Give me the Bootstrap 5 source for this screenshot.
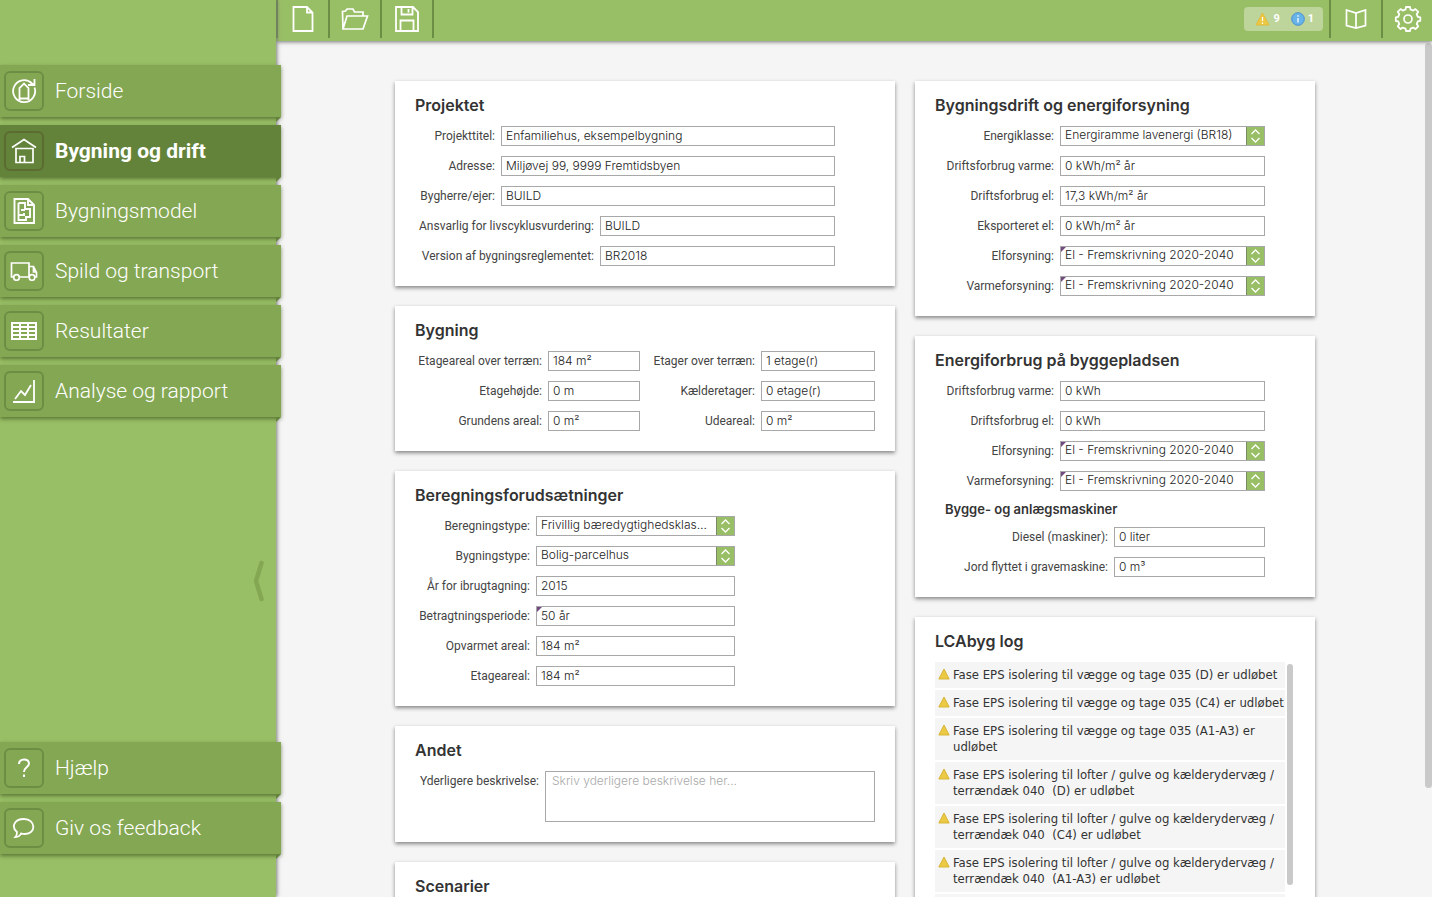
<!DOCTYPE html>
<html lang="da">
<head>
<meta charset="utf-8">
<meta name="viewport" content="width=device-width, initial-scale=1">
<title>LCAbyg – Bygning og drift</title>
<link href="https://cdn.jsdelivr.net/npm/bootstrap@5.3.0/dist/css/bootstrap.min.css" rel="stylesheet">
<style>
  :root { --leaf:#99bf66; --moss:#84a753; --pine:#63833a; --edge:#6b8e44; --ink:#333; }
  body { font-family:Roboto, "Liberation Sans", sans-serif; color:var(--ink); background:#f5f5f5; }
  svg { display:block; fill:none; stroke:#fff; stroke-width:2; }

  .side { width:276px; background:var(--leaf); box-shadow:1px 0 4px #777; z-index:2; padding:65px 0 43px; }
  .side-list { display:flex; flex-direction:column; gap:8px; margin-right:-5px; }
  .side-link { position:relative; display:flex; align-items:center; gap:11px; height:52px; padding-left:4px;
    background:var(--moss); color:#fff; font-size:21px; line-height:28px; font-weight:300; text-decoration:none; box-shadow:0 2px 4px rgba(50,70,20,.6); }
  .side-link::after { content:""; position:absolute; top:100%; right:0; border-top:5px solid var(--pine); border-right:5px solid transparent; }
  .side-link.active { background:var(--pine); font-weight:700; }
  .side-icon { width:40px; height:40px; border:2px solid var(--edge); border-radius:6px; display:grid; place-items:center; }
  .active .side-icon { border-color:#5c6c30; }
  .fold { border:0; background:none; padding:2px 12px 0 0; }

  .topbar { height:41px; background:var(--leaf); z-index:1; box-shadow:0 1px 4px #777; }
  .tool { width:52px; height:38px; border:0; border-left:2px solid var(--edge); background:none; padding:0; display:grid; place-items:center; }
  .tool-last { border-right:2px solid var(--edge); width:54px; }
  .tool-end { width:51px; }
  .status { height:24px; padding:0 9px 0 11px; margin:7px 6px 0 0; border:0; border-radius:4px; background:#bdd49b; color:#fff; font-size:11px; font-weight:700; gap:3px; }

  .scroller { overflow-y:auto; scrollbar-width:none; padding:40px 0 20px 2px; }
  .scroller::-webkit-scrollbar, .log::-webkit-scrollbar { display:none; }
  .thumb { position:absolute; width:7px; border-radius:4px; background:#c9c9c9; }
  .thumb-page { right:0; top:2px; height:87%; }
  .thumb-log { right:-8px; top:2px; height:74%; width:6px; }
  .board { max-width:920px; display:grid; grid-template-columns:minmax(0,5fr) minmax(0,4fr); gap:20px; margin:0 auto; }
  .stack { display:flex; flex-direction:column; gap:20px; }
  .panel { background:#fff; padding:15px 20px 20px; box-shadow:0 2px 4px rgba(0,0,0,.45); }
  .panel h2 { font-family:Inter, Roboto, sans-serif; font-size:16px; line-height:18px; font-weight:600; margin:0 0 12px; }
  .panel h3 { font-family:Inter, Roboto, sans-serif; font-size:13px; line-height:16px; font-weight:600; margin:10px 0 10px 10px; }

  .fields { display:grid; gap:10px 6px; align-items:center; }
  .fields label { font-size:12px; line-height:20px; text-align:right; white-space:nowrap; color:#444; }
  .f-short { grid-template-columns:80px 1fr; padding-right:40px; }
  .f-long { grid-template-columns:179px 1fr; padding-right:40px; margin-top:10px; }
  .f-double { grid-template-columns:127px 92px 109px 1fr; }
  .f-calc { grid-template-columns:115px 1fr; padding-right:140px; }
  .f-energy { grid-template-columns:119px 1fr; padding-right:30px; }
  .f-machine { grid-template-columns:173px 1fr; padding-right:30px; }
  .f-note { grid-template-columns:124px 1fr; align-items:start; }
  .fields input, .fields select, .fields textarea { width:100%; min-width:0; height:20px; padding:0 4px 2px; border:1px solid #a8a8a8;
    border-radius:0; background:#fff; color:#222; font-family:Inter, Roboto, sans-serif; font-weight:300; font-size:12px; line-height:16px; }
  .fields textarea { height:51px; padding:1px 6px; resize:none; display:block; }
  .fields textarea::placeholder { color:#aaa; }
  .fields select { appearance:none; padding-right:22px; background:#fff url("data:image/svg+xml,%3Csvg xmlns='http://www.w3.org/2000/svg' width='19' height='20'%3E%3Cpath fill='%2399bf66' stroke='%237b8b68' d='M.5.5h18v19H.5z'/%3E%3Cpath fill='none' stroke='%23fff' stroke-width='1.3' d='M5.500 8l4-4 4 4M5.500 12l4 4 4-4'/%3E%3C/svg%3E") right center/19px 20px no-repeat border-box; }
  .tagbox { position:relative; }
  .tagbox::before { content:""; position:absolute; left:1px; top:1px; border-top:5px solid #734a80; border-right:5px solid transparent; }

  .log-wrap { position:relative; margin-right:10px; }
  .log { height:298px; overflow-y:auto; scrollbar-width:none; font:13px/16px "DejaVu Sans Condensed", "Noto Sans", sans-serif; }
  .log li { display:flex; gap:3px; padding:5px 0 5px 3px; margin-bottom:2px; background:#f5f5f5; white-space:pre-wrap; }
  .log svg { flex:none; margin-top:1px; stroke:#d8b537; stroke-width:1; fill:#ecc944; }
  .scen { min-height:113px; }
</style>
</head>
<body>
<div class="d-flex vh-100 overflow-hidden">
  <nav class="side d-flex flex-column flex-shrink-0 position-relative" aria-label="Hovedmenu">
    <div class="side-list">
      <a class="side-link" href="#"><span class="side-icon"><svg width="26" height="26" viewBox="0 0 26 26"><path d="M23.500 9.500A11 11 0 1 1 21 5.500l2.500 2M17 7h6.500V1M8.500 22V10L13 5.500 17.500 10v12M8 20.500h10" stroke-width="1.800"/></svg></span><span class="side-text">Forside</span></a>
      <a class="side-link active" href="#" aria-current="page"><span class="side-icon"><svg width="26" height="26" viewBox="0 0 26 26"><path d="M1 9.500 13 1.500 25 9.500M5 10.500v14h17v-14zM9 24.500v-6h4.500v6" stroke-width="1.700"/></svg></span><span class="side-text">Bygning og drift</span></a>
      <a class="side-link" href="#"><span class="side-icon"><svg width="26" height="28" viewBox="0 0 26 28"><path d="M3.500 2H17l6 6v18H3.500zM17 2v6h6M7.500 6H14v6h5v8h-4v3H7.500v-5H13v-2M7.500 6v11M10 13h4" stroke-width="1.900"/></svg></span><span class="side-text">Bygningsmodel</span></a>
      <a class="side-link" href="#"><span class="side-icon"><svg width="28" height="20" viewBox="0 0 28 20"><path d="M3.500 16H1.500V2H19v14H9M19 5.500h4.500l3 6V16h-2M19 16h.5M23.500 6v5h3" stroke-width="1.700"/><g stroke-width="1.700"><circle cx="6.500" cy="16.500" r="2.800"/><circle cx="22" cy="16.500" r="2.800"/></g></svg></span><span class="side-text">Spild og transport</span></a>
      <a class="side-link" href="#"><span class="side-icon"><svg width="26" height="18" viewBox="0 0 26 18"><path d="M1 1h24v16H1zM1 5h24M1 9h24M1 13h24M9 1v16M17 1v16"/></svg></span><span class="side-text">Resultater</span></a>
      <a class="side-link" href="#"><span class="side-icon"><svg width="24" height="24" viewBox="0 0 24 24"><path d="M22 1v22M1 23h22M3 20l6-8 4 4 6-10" stroke-width="1.800"/></svg></span><span class="side-text">Analyse og rapport</span></a>
    </div>
    <div class="flex-grow-1 d-flex align-items-center justify-content-end">
      <button class="fold" aria-label="Skjul menu"><svg width="12" height="42" viewBox="0 0 12 42"><path d="M9.500 3 4 21l5.500 18" style="stroke:var(--moss)" stroke-width="4.500" stroke-linecap="round" stroke-linejoin="round"/></svg></button>
    </div>
    <div class="side-list">
      <a class="side-link" href="#"><span class="side-icon"><svg width="14" height="20" viewBox="0 0 14 20"><path d="M2 6C2 0 12 0 12 5.500 12 9 7 9 7 14M7 16.500v2.500"/></svg></span><span class="side-text">Hjælp</span></a>
      <a class="side-link" href="#"><span class="side-icon"><svg width="24" height="22" viewBox="0 0 24 22"><path d="M12 2c12 0 12.500 15 1 15-2 0-3-.3-4-.5C8 19 5 20 3.500 20 5 18.500 5 17 5 15-1 10 2 2 12 2z" stroke-width="1.800"/></svg></span><span class="side-text">Giv os feedback</span></a>
    </div>
  </nav>

  <div class="flex-grow-1 d-flex flex-column overflow-hidden">
    <header class="topbar d-flex flex-shrink-0 position-relative">
      <button class="tool" aria-label="Ny"><svg width="22" height="26" viewBox="0 0 22 26"><path d="M1.500 1H15l5.500 5.500V25h-19zM15 1v5.500h5.500" stroke-width="1.800"/></svg></button>
      <button class="tool" aria-label="Åbn"><svg width="28" height="24" viewBox="0 0 28 24"><path d="M2 22 1.500 4.500l3-.5L6 2h6l1.500 3H22v4M2 22 6 9h20.500l-4.500 13z" stroke-width="1.700"/></svg></button>
      <button class="tool tool-last" aria-label="Gem"><svg width="24" height="26" viewBox="0 0 24 26"><path d="M1 1h17l5 5v19H1zM6.500 1v7.500h11V1M13.500 3v3.500M5.500 25V14.500h13V25" stroke-width="1.800"/></svg></button>
      <div class="flex-grow-1"></div>
      <button class="status d-flex align-items-center" aria-label="Beskeder">
        <svg width="15" height="14" viewBox="0 0 15 14"><path d="M7.500 1 14 13H1z" fill="#ecc944" stroke="#e2bb3a" stroke-width="1"/><path d="M7.500 5v4M7.500 10.500V12" stroke-width="1.200"/></svg><span>9</span>
        <svg class="ms-2" width="14" height="14" viewBox="0 0 14 14"><circle cx="7" cy="7" r="6.300" fill="#68b3e8" stroke="#4c91cf" stroke-width="1"/><path d="M7 6v4.500M7 3.200v1.500" stroke-width="1.300"/></svg><span>1</span>
      </button>
      <button class="tool" aria-label="Vejledning"><svg width="22" height="20" viewBox="0 0 22 20"><path d="M1.500 1 11 4l9.500-3v15.500L11 19l-9.500-2.500zM11 4v15" stroke-width="1.700"/></svg></button>
      <button class="tool tool-end" aria-label="Indstillinger"><svg width="28" height="28" viewBox="0 0 28 28"><path d="M11.500 4.500 12 2h4l.5 2.500 2.700 1.100 2.200-1.500 2.800 2.800-1.500 2.200 1.100 2.700 2.500.5v3.500l-2.500.6-1.100 2.700 1.500 2.200-2.800 2.800-2.200-1.500-2.700 1.100L16 26h-4l-.5-2.300-2.700-1.100-2.200 1.500-2.800-2.800 1.500-2.200-1.100-2.700L1.800 16v-3.700l2.400-.5 1.100-2.700-1.500-2.200 2.800-2.800 2.200 1.500z" stroke-width="1.800" stroke-linejoin="round"/><circle cx="14" cy="14" r="4" stroke-width="1.700"/></svg></button>
    </header>

    <div class="flex-grow-1 position-relative overflow-hidden d-flex flex-column">
    <main class="scroller flex-grow-1">
      <div class="board">
        <div class="stack">
          <section class="panel">
            <h2>Projektet</h2>
            <div class="fields f-short">
              <label for="a1">Projekttitel:</label><input id="a1" value="Enfamiliehus, eksempelbygning">
              <label for="a2">Adresse:</label><input id="a2" value="Miljøvej 99, 9999 Fremtidsbyen">
              <label for="a3">Bygherre/ejer:</label><input id="a3" value="BUILD">
            </div>
            <div class="fields f-long">
              <label for="a4">Ansvarlig for livscyklusvurdering:</label><input id="a4" value="BUILD">
              <label for="a5">Version af bygningsreglementet:</label><input id="a5" value="BR2018">
            </div>
          </section>
          <section class="panel">
            <h2>Bygning</h2>
            <div class="fields f-double">
              <label for="b1">Etageareal over terræn:</label><input id="b1" value="184 m²">
              <label for="b2">Etager over terræn:</label><input id="b2" value="1 etage(r)">
              <label for="b3">Etagehøjde:</label><input id="b3" value="0 m">
              <label for="b4">Kælderetager:</label><input id="b4" value="0 etage(r)">
              <label for="b5">Grundens areal:</label><input id="b5" value="0 m²">
              <label for="b6">Udeareal:</label><input id="b6" value="0 m²">
            </div>
          </section>
          <section class="panel">
            <h2>Beregningsforudsætninger</h2>
            <div class="fields f-calc">
              <label for="c1">Beregningstype:</label><select id="c1"><option>Frivillig bæredygtighedsklas…</option></select>
              <label for="c2">Bygningstype:</label><select id="c2"><option>Bolig-parcelhus</option></select>
              <label for="c3">År for ibrugtagning:</label><input id="c3" value="2015">
              <label for="c4">Betragtningsperiode:</label><span class="tagbox d-flex"><input id="c4" value="50 år"></span>
              <label for="c5">Opvarmet areal:</label><input id="c5" value="184 m²">
              <label for="c6">Etageareal:</label><input id="c6" value="184 m²">
            </div>
          </section>
          <section class="panel">
            <h2>Andet</h2>
            <div class="fields f-note">
              <label for="d1">Yderligere beskrivelse:</label><textarea id="d1" placeholder="Skriv yderligere beskrivelse her..."></textarea>
            </div>
          </section>
          <section class="panel scen"><h2>Scenarier</h2></section>
        </div>

        <div class="stack">
          <section class="panel">
            <h2>Bygningsdrift og energiforsyning</h2>
            <div class="fields f-energy">
              <label for="e1">Energiklasse:</label><select id="e1"><option>Energiramme lavenergi (BR18)</option></select>
              <label for="e2">Driftsforbrug varme:</label><input id="e2" value="0 kWh/m² år">
              <label for="e3">Driftsforbrug el:</label><input id="e3" value="17,3 kWh/m² år">
              <label for="e4">Eksporteret el:</label><input id="e4" value="0 kWh/m² år">
              <label for="e5">Elforsyning:</label><span class="tagbox d-flex"><select id="e5"><option>El - Fremskrivning 2020-2040</option></select></span>
              <label for="e6">Varmeforsyning:</label><span class="tagbox d-flex"><select id="e6"><option>El - Fremskrivning 2020-2040</option></select></span>
            </div>
          </section>
          <section class="panel">
            <h2>Energiforbrug på byggepladsen</h2>
            <div class="fields f-energy">
              <label for="g1">Driftsforbrug varme:</label><input id="g1" value="0 kWh">
              <label for="g2">Driftsforbrug el:</label><input id="g2" value="0 kWh">
              <label for="g3">Elforsyning:</label><span class="tagbox d-flex"><select id="g3"><option>El - Fremskrivning 2020-2040</option></select></span>
              <label for="g4">Varmeforsyning:</label><span class="tagbox d-flex"><select id="g4"><option>El - Fremskrivning 2020-2040</option></select></span>
            </div>
            <h3>Bygge- og anlægsmaskiner</h3>
            <div class="fields f-machine">
              <label for="g5">Diesel (maskiner):</label><input id="g5" value="0 liter">
              <label for="g6">Jord flyttet i gravemaskine:</label><input id="g6" value="0 m³">
            </div>
          </section>
          <section class="panel">
            <h2>LCAbyg log</h2>
            <div class="log-wrap">
              <ul class="log list-unstyled mb-0">
                <li><svg width="12" height="12" viewBox="0 0 12 12"><path d="M6 1 11.200 11H.8z"/></svg><span>Fase EPS isolering til vægge og tage 035 (D) er udløbet</span></li>
                <li><svg width="12" height="12" viewBox="0 0 12 12"><path d="M6 1 11.200 11H.8z"/></svg><span>Fase EPS isolering til vægge og tage 035 (C4) er udløbet</span></li>
                <li><svg width="12" height="12" viewBox="0 0 12 12"><path d="M6 1 11.200 11H.8z"/></svg><span>Fase EPS isolering til vægge og tage 035 (A1-A3) er udløbet</span></li>
                <li><svg width="12" height="12" viewBox="0 0 12 12"><path d="M6 1 11.200 11H.8z"/></svg><span>Fase EPS isolering til lofter / gulve og kælderydervæg / terrændæk 040  (D) er udløbet</span></li>
                <li><svg width="12" height="12" viewBox="0 0 12 12"><path d="M6 1 11.200 11H.8z"/></svg><span>Fase EPS isolering til lofter / gulve og kælderydervæg / terrændæk 040  (C4) er udløbet</span></li>
                <li><svg width="12" height="12" viewBox="0 0 12 12"><path d="M6 1 11.200 11H.8z"/></svg><span>Fase EPS isolering til lofter / gulve og kælderydervæg / terrændæk 040  (A1-A3) er udløbet</span></li>
                <li><svg width="12" height="12" viewBox="0 0 12 12"><path d="M6 1 11.200 11H.8z"/></svg><span>&nbsp;</span></li>
              </ul>
              <div class="thumb thumb-log"></div>
            </div>
          </section>
        </div>
      </div>
    </main>
    <div class="thumb thumb-page"></div>
    </div>
  </div>
</div>
<script src="https://cdn.jsdelivr.net/npm/bootstrap@5.3.0/dist/js/bootstrap.bundle.min.js"></script>
</body>
</html>
